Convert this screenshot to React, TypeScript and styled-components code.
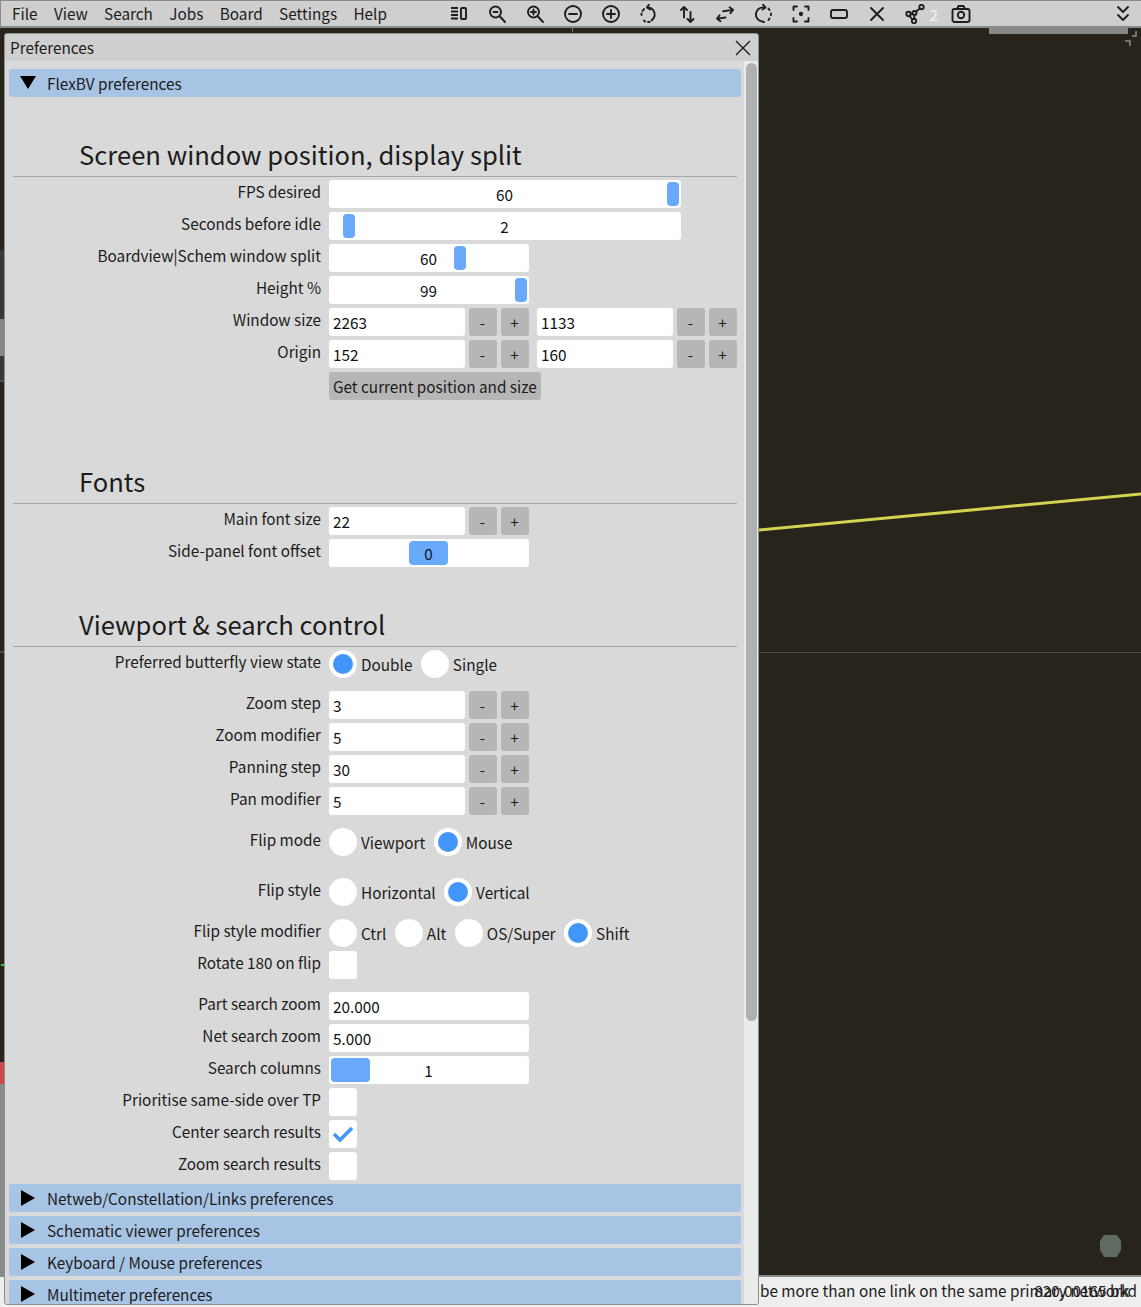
import React from 'react'
import styled, { createGlobalStyle } from 'styled-components'

const GlobalStyle = createGlobalStyle`
  html, body {
    margin: 0;
    padding: 0;
    background: #27241c;
  }
  body {
    font-family: 'Noto Sans CJK SC', 'Noto Sans', sans-serif;
    font-size: 15.3px;
    color: #1c1c1c;
    overflow: hidden;
  }
`

const Page = styled.div`
  position: relative;
  width: 1141px;
  height: 1307px;
  display: flex;
  flex-direction: column;
  overflow: hidden;
`

const MenuBar = styled.div`
  height: 28px;
  box-sizing: border-box;
  flex: none;
  display: flex;
  align-items: center;
  background: #cfcfcf;
  border-top: 1px solid #8a8a8a;
  border-bottom: 2px solid #8a8a8a;
  border-left: 1px solid #8a8a8a;
`

const MenuList = styled.div`
  display: flex;
  gap: 16.400px;
  padding-left: 11px;
  width: 439px;
  box-sizing: border-box;
`

const MenuItem = styled.span`
  line-height: 24px;
  padding-bottom: 2px;
  white-space: nowrap;
`

const Toolbar = styled.div`
  display: flex;
  align-items: center;
`

const ToolSlot = styled.div<{ $ml?: number }>`
  position: relative;
  width: 38px;
  height: 25px;
  margin-left: ${p => p.$ml ?? 0}px;
  display: flex;
  align-items: center;
  justify-content: center;

  svg {
    width: 20px;
    height: 20px;
    fill: none;
    stroke: #1e1e1e;
    stroke-width: 1.9;
    stroke-linecap: round;
    stroke-linejoin: round;
  }
`

const ToolCount = styled.span`
  position: absolute;
  right: -4px;
  top: 1px;
  color: #f4f4f4;
  line-height: 24px;
`

const Collapse = styled(ToolSlot)`
  position: absolute;
  left: 1104px;
  top: 1px;
`

const Canvas = styled.div`
  position: relative;
  flex: 1;
  background: #27241c;
`

const CanvasArt = styled.svg`
  position: absolute;
  inset: 0;
  width: 100%;
  height: 100%;
`

const StatusBar = styled.div`
  position: relative;
  height: 32px;
  flex: none;
  box-sizing: border-box;
  background: #eeeeee;
  border-top: 2px solid #8a8a8a;
  line-height: 26px;
  white-space: nowrap;
  overflow: hidden;
`

const StatusText = styled.span`
  position: absolute;
  left: 760px;
  top: 0;
`

const StatusCoords = styled.span`
  position: absolute;
  right: 4px;
  top: 0;
`

const Window = styled.div`
  position: absolute;
  left: 4px;
  top: 33px;
  width: 755px;
  height: 1272px;
  display: flex;
  flex-direction: column;
  box-sizing: border-box;
  border: 1px solid #8f8f8f;
  border-radius: 3px;
  background: #d9d9d9;
  overflow: hidden;
`

const TitleBar = styled.div`
  height: 27px;
  flex: none;
  display: flex;
  align-items: center;
  justify-content: space-between;
  padding: 0 6px 0 5px;
  background: #cfcfcf;
  line-height: 27px;

  svg {
    width: 18px;
    height: 18px;
    stroke: #1a1a1a;
    stroke-width: 1.4;
  }
`

const WindowBody = styled.div`
  position: relative;
  flex: 1;
  min-height: 0;
  display: flex;
  overflow: hidden;
`

const Ghost = styled.svg`
  position: absolute;
  inset: 0;
  width: 100%;
  height: 100%;
  pointer-events: none;
`

const Content = styled.div`
  position: relative;
  flex: 1;
  min-width: 0;
  padding: 8px 0 0 4px;
  width: 732px;
`

const ScrollTrack = styled.div`
  width: 14px;
  flex: none;
  background: #ebebeb;
  padding: 2px 1px 0 1px;
  box-sizing: border-box;
`

const ScrollThumb = styled.div`
  height: 958px;
  width: 11px;
  margin-left: 1px;
  border-radius: 6px;
  background: #b0b0b0;
`

const Header = styled.div<{ $mt?: number }>`
  width: 732px;
  height: 28px;
  margin-top: ${p => p.$mt ?? 4}px;
  display: flex;
  align-items: center;
  border-radius: 3px;
  background: #a8c4e4;
  line-height: 28px;
  position: relative;
`

const HeaderLabel = styled.span`
  margin-left: 38px;
  white-space: nowrap;
`

const Arrow = styled.svg<{ $open?: boolean }>`
  position: absolute;
  left: ${p => (p.$open ? 11 : 12)}px;
  top: 6px;
  width: ${p => (p.$open ? 16 : 14)}px;
  height: ${p => (p.$open ? 14 : 16)}px;
  fill: #000;
`

const SectionTitle = styled.div<{ $mt: number }>`
  margin: ${p => p.$mt}px 4px 0;
  height: 36px;
  width: 724px;
  border-bottom: 1px solid #a6a6ad;
  font-size: 25.6px;
  line-height: 28px;
  color: #1c1c1c;
  text-indent: 66px;
  white-space: nowrap;
`

const Row = styled.div<{ $mt?: number }>`
  display: flex;
  align-items: center;
  margin: ${p => p.$mt ?? 4}px 0 0 4px;
  height: 28px;
`

const Label = styled.div`
  width: 308px;
  flex: none;
  margin-right: 8px;
  text-align: right;
  white-space: nowrap;
  line-height: 22px;
  padding-bottom: 6px;
`

const Field = styled.div<{ $w?: number }>`
  width: ${p => p.$w ?? 136}px;
  height: 28px;
  flex: none;
  box-sizing: border-box;
  padding: 1px 4px 0;
  border-radius: 3px;
  background: #fff;
  line-height: 26px;
  color: #111;
`

const StepButton = styled.div`
  width: 27px;
  height: 28px;
  flex: none;
  margin-left: 4px;
  padding-right: 1px;
  border-radius: 3px;
  background: #b6b6b6;
  text-align: center;
  line-height: 28px;
`

const PairGap = styled.div`
  width: 8px;
  flex: none;
`

const SliderTrack = styled.div<{ $w: number }>`
  position: relative;
  width: ${p => p.$w - 1}px;
  padding-right: 1px;
  height: 28px;
  border-radius: 3px;
  background: #fff;
  text-align: center;
  line-height: 28px;
  color: #111;
`

const SliderGrab = styled.div`
  position: absolute;
  top: 2px;
  bottom: 2px;
  border-radius: 4px;
  background: #68a9fb;
`

const SliderValue = styled.span`
  position: relative;
`

const ActionButton = styled.div`
  height: 28px;
  padding: 0 4px;
  border-radius: 3px;
  background: #b6b6b6;
  line-height: 28px;
  white-space: nowrap;
`

const RadioCircle = styled.div<{ $on?: boolean }>`
  width: 28px;
  height: 28px;
  flex: none;
  border-radius: 50%;
  background: #fff;
  display: flex;
  align-items: center;
  justify-content: center;

  &::after {
    content: '';
    display: ${p => (p.$on ? 'block' : 'none')};
    width: 20px;
    height: 20px;
    border-radius: 50%;
    background: #4296fa;
  }
`

const RadioText = styled.span`
  margin: 0 8.500px 0 4px;
  white-space: nowrap;
`

const CheckBox = styled.div`
  width: 28px;
  height: 28px;
  flex: none;
  border-radius: 3px;
  background: #fff;
  display: flex;
  align-items: center;
  justify-content: center;

  svg {
    width: 22px;
    height: 18px;
    fill: none;
    stroke: #4296fa;
    stroke-width: 3.6;
  }
`

const Stepper = ({ value, first }: { value: string; first?: boolean }) => (
  <>
    {!first && <PairGap />}
    <Field>{value}</Field>
    <StepButton>-</StepButton>
    <StepButton>+</StepButton>
  </>
)

const Slider = ({ w, value, left, grab = 12 }: { w: number; value: string; left: number; grab?: number }) => (
  <SliderTrack $w={w}>
    <SliderGrab style={{ left, width: grab }} />
    <SliderValue>{value}</SliderValue>
  </SliderTrack>
)

const Radios = ({ items, on }: { items: string[]; on: string }) => (
  <>
    {items.map(item => (
      <React.Fragment key={item}>
        <RadioCircle $on={item === on} />
        <RadioText>{item}</RadioText>
      </React.Fragment>
    ))}
  </>
)

const ClosedHeader = ({ children, mt }: { children: string; mt?: number }) => (
  <Header $mt={mt}>
    <Arrow viewBox="0 0 14 16">
      <path d="M0 0 L14 8 L0 16 Z" />
    </Arrow>
    <HeaderLabel>{children}</HeaderLabel>
  </Header>
)

const tools = [
  <>
    <path d="M2 4h7M2 7.500h7M2 11h7M2 14.500h7" strokeLinecap="butt" />
    <rect x="12" y="4" width="5" height="11" rx="1" />
  </>,
  <>
    <circle cx="8.500" cy="8" r="5.500" />
    <path d="M12.500 12l5.500 6M6.500 8h4" />
  </>,
  <>
    <circle cx="8.500" cy="8" r="5.500" />
    <path d="M12.500 12l5.500 6M6 8h5M8.500 5.500v5" />
  </>,
  <>
    <circle cx="10" cy="10" r="8" />
    <path d="M6 10h8" />
  </>,
  <>
    <circle cx="10" cy="10" r="8" />
    <path d="M6 10h8M10 6v8" />
  </>,
  <>
    <path d="M9 3.500a7 7 0 0 1 5 11.500l-1.500 1.500" />
    <path d="M2.500 11v-1.500M3.500 7l1.500 -2M10 .5L8 3.500l3 2" />
    <path d="M5 16.500l1 1M9 18h1.500" />
  </>,
  <>
    <path d="M7 13.500V3M4 6l3 -3 3 3M13.500 8v10M10.500 15l3 3 3 -3" />
  </>,
  <>
    <path d="M10 13.500H1.500l3 -3M1.500 13.500l3 3M8.500 7H18.500l-3 -3M18.500 7l-3 3" transform="rotate(-8 10 10)" />
  </>,
  <>
    <path d="M11 3.500a7 7 0 0 0 -2 14l2 .5" />
    <path d="M18 9.500v1.500M16.500 6l-1 -1.500M10 .5l2.500 3 -3 2M16.500 14.500l-1 1.500" />
  </>,
  <>
    <path d="M2.500 6V2.500H6M14 2.500h3.500V6M17.500 14v3.500H14M6 17.500H2.500V14" />
    <circle cx="10" cy="10" r="1.200" />
  </>,
  <>
    <rect x="2" y="6" width="16" height="8" rx="2" />
  </>,
  <>
    <path d="M4 4l12 12M16 4L4 16" />
  </>,
  <>
    <circle cx="3.500" cy="10" r="2.200" />
    <circle cx="9" cy="17" r="2.200" />
    <circle cx="16.500" cy="3" r="2.200" />
    <circle cx="9.500" cy="9" r="2" />
    <path d="M5.500 10h2M4.500 12l3 3.500M11 7.500l4 -3M9.500 11l-.5 4" />
  </>,
  <>
    <rect x="1.500" y="5" width="17" height="13" rx="2" />
    <path d="M6 5l1.500 -3h5L14 5" />
    <circle cx="10" cy="11" r="3.200" />
  </>,
]

const App: React.FC = () => {
  return (
    <Page>
      <GlobalStyle />
      <MenuBar>
        <MenuList>
          {['File', 'View', 'Search', 'Jobs', 'Board', 'Settings', 'Help'].map(m => (
            <MenuItem key={m}>{m}</MenuItem>
          ))}
        </MenuList>
        <Toolbar>
          {tools.map((icon, i) => (
            <ToolSlot key={i} $ml={i === 13 ? 8 : 0}>
              <svg viewBox="0 0 20 20">{icon}</svg>
              {i === 12 && <ToolCount>2</ToolCount>}
            </ToolSlot>
          ))}
        </Toolbar>
        <Collapse>
          <svg viewBox="0 0 20 20">
            <path d="M5 3l5 5 5 -5M5 11l5 5 5 -5" />
          </svg>
        </Collapse>
      </MenuBar>
      <Canvas>
        <CanvasArt viewBox="0 28 1141 1247" preserveAspectRatio="none">
          <rect x="989" y="28" width="139" height="6" fill="#888" />
          <path d="M1136 31v5h-4M1125 41h5v5" stroke="#8a8a8a" strokeWidth="1.500" fill="none" />
          <path d="M572.500 28v4" stroke="#777" />
          <path d="M759 530L1141 494" stroke="#d4d24e" strokeWidth="3" />
          <path d="M759 652.500H1141" stroke="#4a4a46" strokeWidth="1" />
          <path d="M1104 1235h13l4 6v9l-4 7h-13l-4 -7v-9z" fill="#5f6b60" />
          <rect x="0" y="250" width="5" height="69" fill="#38383a" />
          <rect x="0" y="319" width="5" height="37" fill="#888" />
          <rect x="0" y="356" width="5" height="24" fill="#38383a" />
          <path d="M0 381H5M0 652H5" stroke="#777" />
          <rect x="1" y="964" width="4" height="2" fill="#3bc43b" />
          <rect x="0" y="1062" width="5" height="22" fill="#cc4a4a" />
          <rect x="0" y="1084" width="5" height="191" fill="#8a8a8a" />
        </CanvasArt>
      </Canvas>
      <StatusBar>
        <StatusText>be more than one link on the same primary network</StatusText>
        <StatusCoords>820,00165 bkd</StatusCoords>
      </StatusBar>

      <Window>
        <TitleBar>
          <span>Preferences</span>
          <svg viewBox="0 0 18 18">
            <path d="M2 2l14 14M16 2L2 16" />
          </svg>
        </TitleBar>
        <WindowBody>
          <Ghost viewBox="0 0 740 1244" preserveAspectRatio="none">
            <path d="M586 520L560 1240M270 1060L680 1180" stroke="#fff" strokeOpacity="0.05" strokeWidth="3" fill="none" />
            <circle cx="580" cy="310" r="55" fill="#fff" fillOpacity="0.02" />
          </Ghost>
          <Content>
            <Header $mt={0}>
              <Arrow $open viewBox="0 0 16 14">
                <path d="M0 1 L16 1 L8 14 Z" />
              </Arrow>
              <HeaderLabel>FlexBV preferences</HeaderLabel>
            </Header>

            <SectionTitle $mt={43}>Screen window position, display split</SectionTitle>
            <Row $mt={3}>
              <Label>FPS desired</Label>
              <Slider w={352} value="60" left={338} />
            </Row>
            <Row>
              <Label>Seconds before idle</Label>
              <Slider w={352} value="2" left={14} />
            </Row>
            <Row>
              <Label>Boardview|Schem window split</Label>
              <Slider w={200} value="60" left={125} />
            </Row>
            <Row>
              <Label>Height %</Label>
              <Slider w={200} value="99" left={186} />
            </Row>
            <Row>
              <Label>Window size</Label>
              <Stepper first value="2263" />
              <Stepper value="1133" />
            </Row>
            <Row>
              <Label>Origin</Label>
              <Stepper first value="152" />
              <Stepper value="160" />
            </Row>
            <Row>
              <Label />
              <ActionButton>Get current position and size</ActionButton>
            </Row>

            <SectionTitle $mt={67}>Fonts</SectionTitle>
            <Row $mt={3}>
              <Label>Main font size</Label>
              <Stepper first value="22" />
            </Row>
            <Row>
              <Label>Side-panel font offset</Label>
              <Slider w={200} value="0" left={80} grab={39} />
            </Row>

            <SectionTitle $mt={43}>Viewport &amp; search control</SectionTitle>
            <Row $mt={3}>
              <Label>Preferred butterfly view state</Label>
              <Radios items={['Double', 'Single']} on="Double" />
            </Row>
            <Row $mt={13}>
              <Label>Zoom step</Label>
              <Stepper first value="3" />
            </Row>
            <Row>
              <Label>Zoom modifier</Label>
              <Stepper first value="5" />
            </Row>
            <Row>
              <Label>Panning step</Label>
              <Stepper first value="30" />
            </Row>
            <Row>
              <Label>Pan modifier</Label>
              <Stepper first value="5" />
            </Row>
            <Row $mt={13}>
              <Label>Flip mode</Label>
              <Radios items={['Viewport', 'Mouse']} on="Mouse" />
            </Row>
            <Row $mt={22}>
              <Label>Flip style</Label>
              <Radios items={['Horizontal', 'Vertical']} on="Vertical" />
            </Row>
            <Row $mt={13}>
              <Label>Flip style modifier</Label>
              <Radios items={['Ctrl', 'Alt', 'OS/Super', 'Shift']} on="Shift" />
            </Row>
            <Row>
              <Label>Rotate 180 on flip</Label>
              <CheckBox />
            </Row>
            <Row $mt={13}>
              <Label>Part search zoom</Label>
              <Field $w={200}>20.000</Field>
            </Row>
            <Row>
              <Label>Net search zoom</Label>
              <Field $w={200}>5.000</Field>
            </Row>
            <Row>
              <Label>Search columns</Label>
              <Slider w={200} value="1" left={2} grab={39} />
            </Row>
            <Row>
              <Label>Prioritise same-side over TP</Label>
              <CheckBox />
            </Row>
            <Row>
              <Label>Center search results</Label>
              <CheckBox>
                <svg viewBox="0 0 22 18">
                  <path d="M2 9l6 6L20 3" />
                </svg>
              </CheckBox>
            </Row>
            <Row>
              <Label>Zoom search results</Label>
              <CheckBox />
            </Row>

            <ClosedHeader>Netweb/Constellation/Links preferences</ClosedHeader>
            <ClosedHeader>Schematic viewer preferences</ClosedHeader>
            <ClosedHeader>Keyboard / Mouse preferences</ClosedHeader>
            <ClosedHeader>Multimeter preferences</ClosedHeader>
          </Content>
          <ScrollTrack>
            <ScrollThumb />
          </ScrollTrack>
        </WindowBody>
      </Window>
    </Page>
  )
}

export default App
